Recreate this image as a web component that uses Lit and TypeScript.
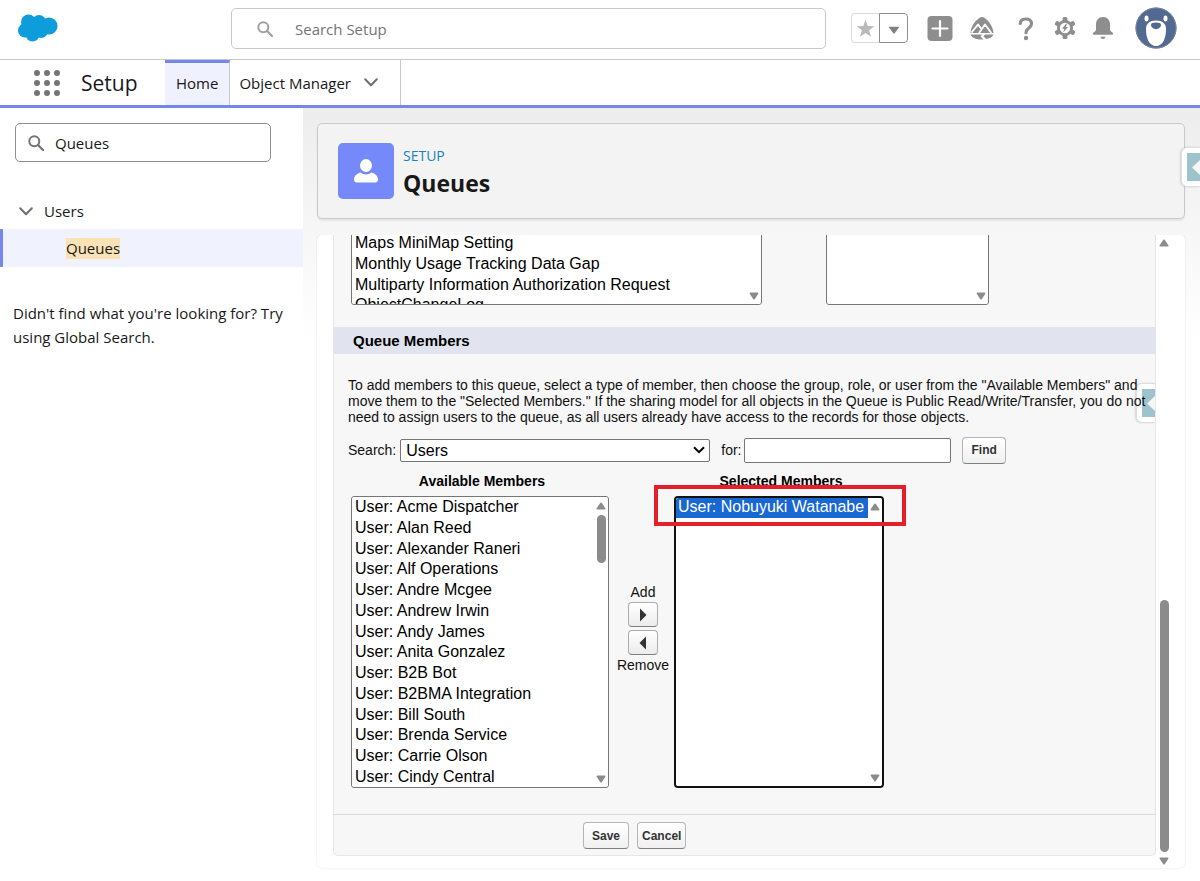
import { LitElement, html, css, svg } from "lit";
import { customElement, property, state } from "lit/decorators.js";
import { classMap } from "lit/directives/class-map.js";

const chevron = html`<svg class="chev" viewBox="0 0 14 9" aria-hidden="true">
  <path d="M1.2 1.2 7 7.2l5.800-6" fill="none" stroke="#6f6f6f" stroke-width="2" stroke-linecap="round" stroke-linejoin="round" />
</svg>`;

const magnifier = html`<svg class="mag" viewBox="0 0 16 16" aria-hidden="true">
  <circle cx="6.300" cy="6.300" r="5" fill="none" stroke="currentColor" stroke-width="2" />
  <path d="M10 10l5 5" stroke="currentColor" stroke-width="2.300" stroke-linecap="round" />
</svg>`;

const gearTeeth = [0, 60, 120, 180, 240, 300];

@customElement("scroll-track")
class ScrollTrack extends LitElement {
  @property({ type: Boolean }) up = true;
  @property({ type: Number }) start = 0;
  @property({ type: Number }) size = 0;

  static styles = css`
    :host { display: flex; flex-direction: column; align-items: center; justify-content: space-between; width: 10px; }
    .rail { flex: 1; width: 9px; margin: 5px 0; position: relative; }
    .thumb { position: absolute; left: 0; right: 0; border-radius: 5px; background: #8b8b8b; }
    svg { display: block; width: 10px; height: 8px; fill: #8b8b8b; }
  `;

  render() {
    return html`
      <svg viewBox="0 0 10 8">${this.up ? svg`<path d="M4.300.8q.7-.8 1.400 0l3.600 5.400q.5 1.300-.8 1.300h-7q-1.300 0-.8-1.300z" />` : ""}</svg>
      <div class="rail">
        ${this.size ? html`<div class="thumb" style="top:${this.start}%;height:${this.size}%"></div>` : ""}
      </div>
      <svg viewBox="0 0 10 8"><path d="M4.300 7.200q.7.8 1.400 0l3.600-5.400q.5-1.300-.8-1.300h-7q-1.300 0-.8 1.300z" /></svg>
    `;
  }
}

@customElement("list-box")
class ListBox extends LitElement {
  @property() name = "";
  @property({ type: Array }) items: string[] = [];
  @property() selected = "";
  @property({ type: Boolean, reflect: true }) active = false;
  @property({ type: Boolean, reflect: true }) short = false;
  @property({ type: Number }) thumb = 0;

  static styles = css`
    :host { display: block; position: relative; height: 292px; box-sizing: border-box; background: #fff; border: 1px solid #767676; border-radius: 3px; overflow: hidden; }
    :host([active]) { border: 2px solid #101010; border-radius: 4px; }
    :host([short]) { height: 73px; }
    select {
      display: block; width: 100%; height: 100%; margin: 0; padding: 0 14px 0 0; border: 0; outline: 0;
      background: #fff; color: #000; font-family: "Liberation Sans", Arial, sans-serif; font-size: 16px;
      overflow: hidden; scrollbar-width: none; box-sizing: border-box;
    }
    option { min-height: 0; padding: 1px 3px 0.11em; white-space: nowrap; }
    :host([active]) option { padding-top: 0; padding-left: 2px; padding-bottom: 2px; }
    option:checked { background: linear-gradient(#1967d2, #1967d2); -webkit-text-fill-color: #fff; }
    scroll-track { position: absolute; top: 5px; bottom: 4px; right: 2px; }
  `;

  render() {
    return html`
      <select multiple size="14" aria-label=${this.name}>
        ${this.items.map((i) => html`<option ?selected=${i === this.selected}>${i}</option>`)}
      </select>
      <scroll-track aria-hidden="true" .up=${!this.short} .start=${0} .size=${this.thumb}></scroll-track>
    `;
  }
}

@customElement("help-tab")
class HelpTab extends LitElement {
  static styles = css`
    button {
      display: block; width: 19px; height: 40px; padding: 5px 0 5px 5px; border: 1px solid #dedede; border-right: 0;
      border-radius: 6px 0 0 6px; background: #fff; box-shadow: -1px 0 2px #0002; box-sizing: border-box;
    }
    svg { display: block; width: 13px; height: 28px; background: #9fc3cd; }
  `;
  render() {
    return html`<button aria-label="Open help panel">
      <svg viewBox="0 0 13 28"><path d="M13 7v15L5 14.500z" fill="#f4f6f7" /></svg>
    </button>`;
  }
}

@customElement("app-root")
class AppRoot extends LitElement {
  @state() private tab = "Home";

  private objects = [
    "Maps MiniMap Setting",
    "Monthly Usage Tracking Data Gap",
    "Multiparty Information Authorization Request",
    "ObjectChangeLog",
  ];

  private members = [
    "Acme Dispatcher", "Alan Reed", "Alexander Raneri", "Alf Operations", "Andre Mcgee", "Andrew Irwin", "Andy James",
    "Anita Gonzalez", "B2B Bot", "B2BMA Integration", "Bill South", "Brenda Service", "Carrie Olson", "Cindy Central",
  ].map((n) => `User: ${n}`);

  static styles = css`
    :host { display: flex; flex-direction: column; min-height: 100vh; background: #fff; color: #181818; font-family: "Open Sans", "Noto Sans", sans-serif; font-size: 15px; }
    * { box-sizing: border-box; }
    button, input, select { font-family: inherit; margin: 0; }
    button { padding: 0; border: 0; background: none; color: inherit; }
    a { color: inherit; text-decoration: none; }
    svg { display: block; flex: none; }
    .mag { width: 16px; height: 16px; }
    .chev { width: 14px; height: 9px; }

    .top { display: grid; grid-template-columns: 231px minmax(200px, 595px) 1fr; align-items: center; height: 60px; border-bottom: 1px solid #c9c9c9; padding-bottom: 3px; }
    .cloud { width: 40px; height: 28px; margin-left: 18px; }
    .search { display: flex; align-items: center; gap: 20px; height: 41px; padding: 1px 0 0 25px; border: 1px solid #c9c9c9; border-radius: 5px; color: #a0a0a0; }
    .search input { flex: 1; min-width: 0; border: 0; outline: 0; background: none; font-size: 15px; color: #181818; }
    .search input::placeholder { color: #747474; opacity: 1; }
    .tools { display: flex; align-items: center; justify-content: flex-end; padding-right: 23px; }
    .tools > button { display: block; }
    .fav { display: flex; margin-right: 19px; }
    .fav button { display: grid; place-items: center; width: 28px; height: 30px; border: 1px solid #dddbda; border-right: 0; border-radius: 4px 0 0 4px; }
    .fav button + button { width: 29px; padding-top: 4px; border: 1px solid #8e8e8e; border-radius: 0 4px 4px 0; }
    .w25 { width: 26px; height: 26px; }
    .gapped { margin-right: 15px; }
    .near { margin-right: 8px; }
    .close { margin-right: 6px; }
    .far { margin-right: 20px; }

    .nav { display: flex; height: 48px; border-bottom: 3px solid #7587ea; align-items: stretch; }
    .launcher { display: flex; align-items: center; padding-left: 34px; }
    .launcher svg { width: 26px; height: 26px; }
    .app { display: flex; align-items: center; width: 105px; padding-left: 21px; font-size: 21px; }
    .tab { display: flex; align-items: center; gap: 13px; padding: 0 11px 3px; font-size: 15px; border-top: 3px solid transparent; border-right: 1px solid #c9c9c9; }
    .tab.wide { padding: 3px 22px 3px 9px; border-top: 0; }
    .tab.on { background: #f0f1fe; border-top-color: #7587ea; }

    .body { flex: 1; display: grid; grid-template-columns: 303px minmax(0, 1fr); }
    .side { padding-top: 15px; }
    .quick { display: flex; align-items: center; gap: 11px; width: 256px; height: 39px; margin-left: 15px; padding-left: 12px; border: 1px solid #8e8e8e; border-radius: 5px; color: #747474; }
    .quick input { flex: 1; min-width: 0; border: 0; outline: 0; padding: 0; font-size: 15px; color: #181818; }
    .group { display: flex; align-items: center; gap: 11px; height: 36px; margin-top: 31px; padding-left: 19px; font-size: 15px; }
    .item { display: flex; align-items: center; height: 38px; padding-left: 63px; border-left: 3px solid #7587ea; background: #f0f2fe; }
    mark { background: #f9e3b6; color: inherit; line-height: 21px; }
    .hint { margin: 34px 13px 0; line-height: 24px; }

    .main { position: relative; display: flex; flex-direction: column; padding: 15px 15px 13px 14px; background: linear-gradient(#ededed, #fff 230px); overflow: hidden; }
    .head { display: flex; align-items: center; gap: 9px; height: 96px; padding-left: 20px; border: 1px solid #c9c9c9; border-radius: 5px; background: #f3f3f3; box-shadow: 0 2px 2px #0001; }
    .badge { width: 56px; height: 56px; border-radius: 5px; background: #7589fb; display: grid; place-items: center; }
    .badge svg { width: 24px; height: 24px; }
    .title { padding-top: 4px; }
    .crumb { margin: 0; font-size: 14px; line-height: 20px; color: #1b80c4; }
    h1 { margin: 0; font-size: 23px; line-height: 34px; font-weight: 700; }
    .edge { position: absolute; right: 0; top: 39px; }

    .card { position: relative; flex: 1; display: flex; margin-top: 16px; padding-left: 16px; background: #fff; border-radius: 5px; box-shadow: 0 0 2px #0002; clip-path: inset(0 -3px -3px -3px); }
    .card > scroll-track { margin: 4px 16px 3px 3px; }
    .pane { position: relative; flex: 1; min-width: 0; margin-bottom: 12px; display: flex; flex-direction: column; background: #f7f7f7; border: 1px solid #e6e6e6; border-top: 0; border-radius: 0 0 5px 5px; font-family: "Liberation Sans", Arial, sans-serif; font-size: 14px; color: #111; overflow: hidden; }
    .objects { display: flex; gap: 64px; margin-top: -3px; padding-left: 17px; }
    .objects list-box:first-child { width: 411px; }
    .objects list-box + list-box { width: 163px; }
    h2 { margin: 22px 0 0; padding-left: 19px; font-size: 15px; line-height: 27px; font-weight: 700; color: #000; background: #e1e4ee; }
    .intro { position: relative; z-index: 1; margin: 23px 6px 0 14px; line-height: 16px; pointer-events: none; }
    .row { display: flex; align-items: center; height: 26px; margin-top: 12px; padding-left: 14px; }
    .pick { position: relative; display: flex; align-items: center; width: 310px; margin: 0 11px 0 4px; }
    .pick select { appearance: none; width: 100%; height: 23px; padding: 0 5px; border: 1px solid #767676; border-radius: 2px; background: #fff; color: #000; font-size: 16px; }
    .pick svg { position: absolute; right: 5px; width: 12px; height: 8px; pointer-events: none; }
    .row input { width: 207px; height: 25px; margin: 0 11px 0 3px; border: 1px solid #767676; border-radius: 2px; background: #fff; }
    .btn { height: 27px; padding: 0 8px; border: 1px solid #b5b5b5; border-bottom-color: #7f7f7f; border-radius: 4px; background: linear-gradient(#fff, #f0f0f0); color: #333; font-size: 12px; font-weight: 700; }
    .duel { display: grid; grid-template-columns: 258px 65px 210px; padding-left: 17px; }
    .duel h3 { margin: 0; padding: 4px 0 0 4px; text-align: center; font-size: 14px; line-height: 29px; font-weight: 700; color: #000; }
    .moves { grid-row: 1 / 3; grid-column: 2; display: flex; flex-direction: column; align-items: center; gap: 3px; padding: 122px 0 0 3px; }
    .moves span { line-height: 14px; }
    .moves button { display: grid; place-items: center; width: 30px; height: 25px; border: 1px solid #adadad; border-bottom-color: #7f7f7f; border-radius: 4px; background: linear-gradient(#fff, #ececec); }
    .moves svg { width: 8px; height: 14px; fill: #333; }
    .chosen { grid-column: 3; grid-row: 2; position: relative; }
    .ring { position: absolute; left: -20px; right: -22px; top: -11px; height: 41px; border: 4px solid #e6202a; pointer-events: none; }
    .foot { display: flex; gap: 8px; margin-top: 26px; padding: 7px 0 6px 249px; border-top: 1px solid #dcdcdc; }
    .foot .btn + .btn { padding: 0 4px; }
    .second { position: absolute; right: 0; top: 148px; }
  `;

  render() {
    return html`
      <header class="top">
        <svg class="cloud" viewBox="0 0 40 28" role="img" aria-label="Salesforce">
          <g fill="#0d9dda">
            <circle cx="10.500" cy="8" r="7.500" /><circle cx="21" cy="8" r="7" /><circle cx="31" cy="12" r="8.600" />
            <circle cx="7" cy="16.500" r="7" /><circle cx="14.500" cy="20.500" r="7" /><circle cx="23" cy="17" r="7" /><rect x="9" y="6" width="18" height="14" />
          </g>
        </svg>
        <label class="search">${magnifier}<input type="search" placeholder="Search Setup" aria-label="Search Setup" /></label>
        <div class="tools">
          <div class="fav">
            <button aria-label="Favorite"><svg width="19" height="19" viewBox="0 0 20 20"><path fill="#b9b9b9" d="M10 .8l2.300 6.600 7 .2-5.500 4.200 2 6.900L10 14.700l-5.800 4 2-6.900L.7 7.600l7-.2z" /></svg></button>
            <button aria-label="Favorites list"><svg width="12" height="8" viewBox="0 0 12 8"><path fill="#808080" d="M.5.700h11L6.500 7.500h-1z" /></svg></button>
          </div>
          <button class="gapped" aria-label="Global actions">
            <svg class="w25" viewBox="0 0 26 26"><rect x=".500" y="1" width="25" height="25" rx="4" fill="#8e8e8e" /><path d="M13 6v15M5.500 13.500h15" stroke="#fff" stroke-width="2.200" stroke-linecap="round" /></svg>
          </button>
          <button class="gapped" aria-label="Guidance center">
            <svg width="28" height="26" viewBox="0 0 28 26">
              <path fill="#8e8e8e" d="M14 2c1 0 2 .5 3 1.200 4 3 8 8 8.500 14.800h-23C3 11 7 6 11 3.200 12 2.500 13 2 14 2zM2.500 19.500H14l-1.500 2 3 3c-5.500.3-11-.5-13-5zm14.500 0h8.500c-1.500 3-4 4-7.500 4.500l-2.500-2.700z" />
              <path d="M3.500 17.500l6.500-8 3.500 4.600M11 18l6-8.500 6.300 8.500" fill="none" stroke="#fff" stroke-width="1.900" stroke-linejoin="round" />
            </svg>
          </button>
          <button class="close" aria-label="Help">
            <svg width="30" height="26" viewBox="0 0 30 26"><path d="M9.300 8.500C9.300 5.300 12 4 14.800 4c3 0 5.700 1.500 5.700 4.700 0 4.300-5.500 4.300-5.500 9" fill="none" stroke="#8e8e8e" stroke-width="3.200" stroke-linecap="round" /><circle cx="15" cy="23" r="2.200" fill="#8e8e8e" /></svg>
          </button>
          <button class="near" aria-label="Setup menu">
            <svg width="36" height="26" viewBox="-18 -13 36 26">
              <g fill="#8e8e8e">${gearTeeth.map((a) => svg`<rect x="-2.400" y="-11" width="4.800" height="7" rx="1.500" transform="rotate(${a})" />`)}<circle r="8" /></g>
              <circle r="5.200" fill="#fff" /><path fill="#8e8e8e" d="M1-4.300L-3 .800h2.300L-1.800 4.400 3-.9H.7L2.200-4.300z" />
            </svg>
          </button>
          <button class="far" aria-label="Notifications">
            <svg width="24" height="26" viewBox="0 0 24 26"><path fill="#8e8e8e" d="M12 2c4.500 0 7 3.200 7 7.500v4.700c0 1.300.8 2.100 2.500 3.300 1.200 1 .9 2.300-.6 2.300H3.100c-1.500 0-1.800-1.300-.6-2.300C4.200 16.300 5 15.500 5 14.200V9.500C5 5.200 7.500 2 12 2zM9.500 21.700h5c-.3 1.500-1.200 2.200-2.500 2.200s-2.200-.7-2.500-2.200z" /></svg>
          </button>
          <button aria-label="View profile">
            <svg width="42" height="42" viewBox="0 0 42 42">
              <circle cx="21" cy="21" r="20.500" fill="#526a92" />
              <circle cx="21" cy="21" r="20" fill="none" stroke="#7d8798" />
              <ellipse cx="11.500" cy="11.500" rx="2" ry="2.900" fill="#fff" /><ellipse cx="30.500" cy="11.500" rx="2" ry="2.900" fill="#fff" />
              <path fill="#fff" d="M21 13.500c6.300 0 10 3 10 8.500C31 31 28 39 21 39S11 31 11 22c0-5.500 3.700-8.500 10-8.500z" />
              <path fill="#526a92" d="M21 15.500c2.800 0 5 .7 5 2.500 0 2-2.500 4.200-5 4.200s-5-2.200-5-4.200c0-1.800 2.200-2.500 5-2.500z" />
            </svg>
          </button>
        </div>
      </header>

      <nav class="nav" aria-label="Setup">
        <button class="launcher" aria-label="App Launcher">
          <svg viewBox="0 0 26 26" fill="#747474">${[3, 13, 23].map((y) => [3, 13, 23].map((x) => svg`<circle cx=${x} cy=${y} r="3" />`))}</svg>
        </button>
        <span class="app">Setup</span>
        <a href="#home" class=${classMap({ tab: true, on: this.tab === "Home" })} @click=${() => (this.tab = "Home")}>Home</a>
        <a href="#objects" class=${classMap({ tab: true, wide: true, on: this.tab === "Objects" })} @click=${() => (this.tab = "Objects")}>Object Manager ${chevron}</a>
      </nav>

      <div class="body">
        <aside class="side">
          <label class="quick">${magnifier}<input type="text" aria-label="Quick Find" .value=${"Queues"} /></label>
          <button class="group" aria-expanded="true">${chevron}Users</button>
          <a class="item" href="#queues"><mark>Queues</mark></a>
          <p class="hint">Didn't find what you're looking for? Try using Global Search.</p>
        </aside>

        <main class="main">
          <header class="head">
            <div class="badge"><svg viewBox="0 0 24 24" fill="#fff"><ellipse cx="12" cy="6.500" rx="6" ry="6.500" /><path d="M6.500 13.500c1.500 1.300 3.300 2 5.500 2s4-.7 5.500-2c3.500 1 6.500 3.600 6.500 6.800 0 2.200-1 3.200-3 3.200H3c-2 0-3-1-3-3.200 0-3.200 3-5.800 6.500-6.800z" /></svg></div>
            <div class="title">
              <p class="crumb">SETUP</p>
              <h1>Queues</h1>
            </div>
          </header>
          <help-tab class="edge"></help-tab>

          <section class="card">
            <div class="pane">
              <div class="objects">
                <list-box short name="Available Objects" .items=${this.objects}></list-box>
                <list-box short name="Selected Objects"></list-box>
              </div>
              <h2>Queue Members</h2>
              <p class="intro">To add members to this queue, select a type of member, then choose the group, role, or user from the "Available Members" and move them to the "Selected Members." If the sharing model for all objects in the Queue is Public Read/Write/Transfer, you do not need to assign users to the queue, as all users already have access to the records for those objects.</p>
              <div class="row">
                <label for="type">Search:</label>
                <span class="pick">
                  <select id="type"><option>Users</option><option>Roles</option><option>Public Groups</option></select>
                  <svg viewBox="0 0 12 8" aria-hidden="true"><path d="M1 1.200l5 5 5-5" fill="none" stroke="#000" stroke-width="2" /></svg>
                </span>
                <label for="term">for:</label>
                <input id="term" type="text" />
                <button class="btn">Find</button>
              </div>
              <div class="duel">
                <h3>Available Members</h3>
                <div class="moves">
                  <span>Add</span>
                  <button aria-label="Add"><svg viewBox="0 0 8 14"><path d="M1 .500L7.500 7 1 13.500z" /></svg></button>
                  <button aria-label="Remove"><svg viewBox="0 0 8 14"><path d="M7 .500L.500 7 7 13.500z" /></svg></button>
                  <span>Remove</span>
                </div>
                <h3>Selected Members</h3>
                <list-box name="Available Members" .items=${this.members} .thumb=${19}></list-box>
                <div class="chosen">
                  <list-box active name="Selected Members" .items=${["User: Nobuyuki Watanabe"]} selected="User: Nobuyuki Watanabe"></list-box>
                  <div class="ring"></div>
                </div>
              </div>
              <div class="foot"><button class="btn">Save</button><button class="btn">Cancel</button></div>
              <help-tab class="second"></help-tab>
            </div>
            <scroll-track aria-hidden="true" .start=${58} .size=${42}></scroll-track>
          </section>
        </main>
      </div>
    `;
  }
}
